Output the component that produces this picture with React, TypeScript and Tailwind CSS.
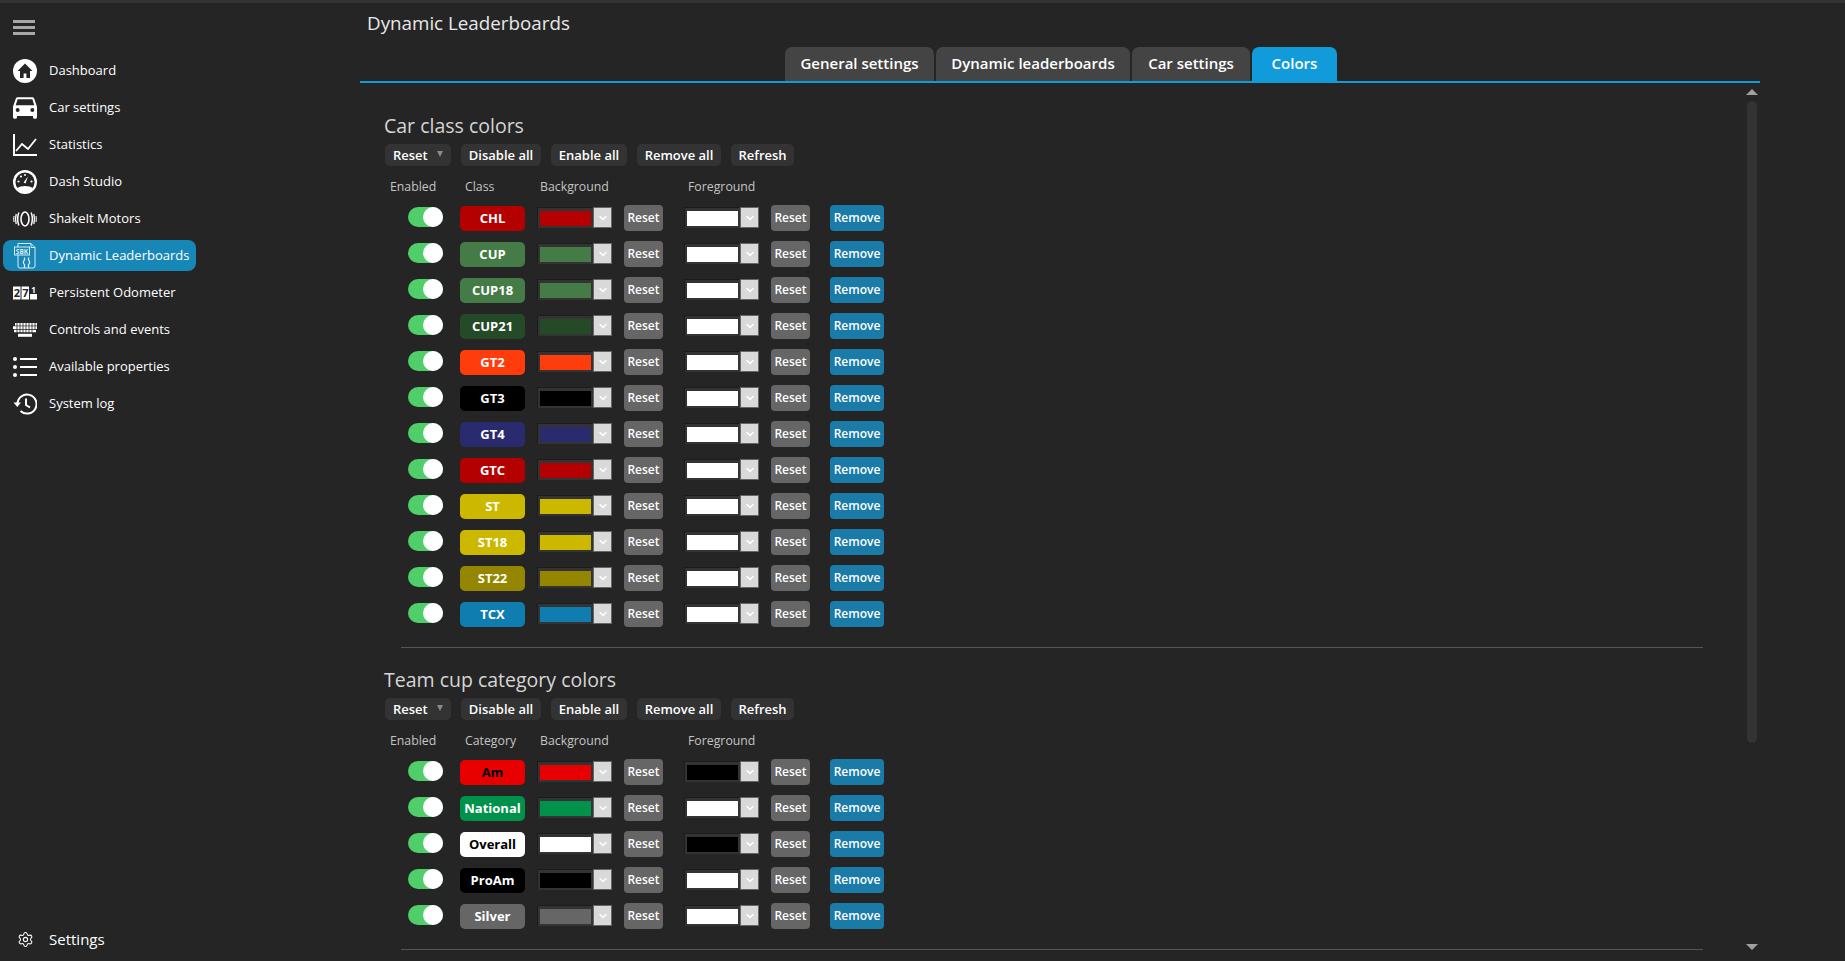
import React from 'react';
import { ChevronDown, Settings } from 'lucide-react';

const HomeIcon = () => (
  <svg viewBox="0 0 24 24" className="w-6 h-6">
    <circle cx="12" cy="12" r="12" fill="#fff" />
    <path d="M12 4.5 4.5 12H7v7h3.6v-4.6h2.8V19H17v-7h2.5z" fill="#252525" />
  </svg>
);

const CarIcon = () => (
  <svg viewBox="3 5 18 16" className="w-6 h-[22px]">
    <path
      fill="#fff"
      d="M5,11L6.5,6.5H17.5L19,11M17.5,16A1.5,1.5 0 0,1 16,14.5A1.5,1.5 0 0,1 17.5,13A1.5,1.5 0 0,1 19,14.5A1.5,1.5 0 0,1 17.5,16M6.5,16A1.5,1.5 0 0,1 5,14.5A1.5,1.5 0 0,1 6.5,13A1.5,1.5 0 0,1 8,14.5A1.5,1.5 0 0,1 6.5,16M18.92,6C18.72,5.42 18.16,5 17.5,5H6.5C5.84,5 5.28,5.42 5.08,6L3,12V20A1,1 0 0,0 4,21H5A1,1 0 0,0 6,20V19H18V20A1,1 0 0,0 19,21H20A1,1 0 0,0 21,20V12L18.92,6Z"
    />
  </svg>
);

const ChartIcon = () => (
  <svg viewBox="0 0 24 24" className="w-6 h-6" fill="none" stroke="#fff">
    <path d="M1 1v21h23" strokeWidth="2" />
    <path d="M3 18l6-7 6 5 8-10" strokeWidth="1.8" />
  </svg>
);

const GaugeIcon = () => (
  <svg viewBox="0 0 24 24" className="w-6 h-6">
    <circle cx="12" cy="12" r="10.8" fill="none" stroke="#fff" strokeWidth="2.4" />
    <path d="M4 18.500a11 11 0 0 0 16 0c-2-1.800-4.800-2.500-8-2.500s-6 .7-8 2.500z" fill="#fff" />
    <path d="M10.500 12.500 15 6.500l-2.500 7z" fill="#fff" />
    <circle cx="5.500" cy="11.500" r="1.100" fill="#fff" />
    <circle cx="18.500" cy="11.500" r="1.100" fill="#fff" />
    <circle cx="8" cy="6.500" r="1.100" fill="#fff" />
    <circle cx="12" cy="5" r="1" fill="#fff" />
  </svg>
);

const ShakeIcon = () => (
  <svg viewBox="0 0 24 16" className="w-6 h-4" fill="none" stroke="#fff">
    <ellipse cx="12" cy="8" rx="4" ry="7" strokeWidth="1.600" />
    <path d="M5.800 1.500c-1.400 4-1.400 9 0 13M18.200 1.500c1.400 4 1.400 9 0 13" strokeWidth="1.500" />
    <path d="M3.200 3c-.9 3.300-.9 6.700 0 10M20.800 3c.9 3.300.9 6.700 0 10" strokeWidth="1.300" />
    <path d="M1 5c-.4 2-.4 4 0 6M23 5c.4 2 .4 4 0 6" strokeWidth="1" />
  </svg>
);

const LeaderboardIcon = () => (
  <svg viewBox="0 0 22 26" className="w-[22px] h-[26px]" fill="none" stroke="#d7ecf5" strokeWidth="1">
    <path d="M4 4V.5h13l4 4V23a2 2 0 0 1-2 2H6a2 2 0 0 1-2-2V12" />
    <path d="M17 .5v4h4" />
    <rect x="0.500" y="4" width="15" height="8" fill="#1787b8" />
    <text x="8" y="10.500" textAnchor="middle" fontSize="6.500" fontWeight="700" fill="#d7ecf5" stroke="none">SBK</text>
    <path d="M10.500 14.500v2.500a2.800 2.800 0 0 0 0 4.500V25M14.500 14.500v2.500a2.800 2.800 0 0 1 0 4.500V25" strokeWidth="1.300" />
  </svg>
);

const OdometerIcon = () => (
  <svg viewBox="0 0 24 14" className="w-6 h-[14px]">
    <rect x="0" y="0.500" width="7.500" height="13" fill="#fff" />
    <rect x="8.500" y="0.500" width="7.500" height="13" fill="#fff" />
    <rect x="17" y="8" width="7" height="5.500" fill="#fff" />
    <text x="3.800" y="11" textAnchor="middle" fontSize="11" fontWeight="700" fill="#252525">2</text>
    <text x="12.300" y="11" textAnchor="middle" fontSize="11" fontWeight="700" fill="#252525">7</text>
    <text x="20.500" y="7" textAnchor="middle" fontSize="8" fontWeight="700" fill="#fff">1</text>
  </svg>
);

const KeyboardIcon = () => (
  <svg viewBox="0 0 24 14" className="w-6 h-[14px]" fill="#fff">
    <path d="M2 0h22v2.600H2z" />
    <path d="M0 3.300h24v2.700H0zM1 6.700h22v2.600H1z" />
    <path d="M5 10.800h14v3H5z" />
    <path d="M4 0v10M7 0v10M10 0v10M13 0v10M16 0v10M19 0v10M22 0v7" stroke="#252525" strokeWidth=".8" />
  </svg>
);

const ListIcon = () => (
  <svg viewBox="0 0 24 20" className="w-6 h-5" fill="#fff">
    <circle cx="2" cy="2" r="2" />
    <circle cx="2" cy="10" r="2" />
    <circle cx="2" cy="18" r="2" />
    <path d="M7 1h17v2H7zM7 9h17v2H7zM7 17h17v2H7z" />
  </svg>
);

const HistoryIcon = () => (
  <svg viewBox="0 0 24 24" className="w-6 h-6" fill="none" stroke="#fff" strokeWidth="2">
    <path d="M4.500 12a9.500 9.500 0 1 1 3 7" />
    <path d="M0.500 10.500h7.500L4.300 15z" fill="#fff" stroke="none" />
    <path d="M13 6.500V13l4 2.500" />
  </svg>
);

const navItems = [
  { name: 'Dashboard', icon: <HomeIcon /> },
  { name: 'Car settings', icon: <CarIcon /> },
  { name: 'Statistics', icon: <ChartIcon /> },
  { name: 'Dash Studio', icon: <GaugeIcon /> },
  { name: 'ShakeIt Motors', icon: <ShakeIcon /> },
  { name: 'Dynamic Leaderboards', icon: <LeaderboardIcon />, active: true },
  { name: 'Persistent Odometer', icon: <OdometerIcon /> },
  { name: 'Controls and events', icon: <KeyboardIcon /> },
  { name: 'Available properties', icon: <ListIcon /> },
  { name: 'System log', icon: <HistoryIcon /> },
];

const tabs = [
  { name: 'General settings', width: 'w-[149px]' },
  { name: 'Dynamic leaderboards', width: 'w-[194px]' },
  { name: 'Car settings', width: 'w-[118px]' },
  { name: 'Colors', width: 'w-[85px]', active: true },
];

const WHITE = 'bg-white';
const BLACK = 'bg-black';

const classRows = [
  { label: 'CHL', bg: 'bg-[#b40000]', fg: WHITE },
  { label: 'CUP', bg: 'bg-[#457b46]', fg: WHITE },
  { label: 'CUP18', bg: 'bg-[#457b46]', fg: WHITE },
  { label: 'CUP21', bg: 'bg-[#254a27]', fg: WHITE },
  { label: 'GT2', bg: 'bg-[#ff3c0c]', fg: WHITE },
  { label: 'GT3', bg: 'bg-black', fg: WHITE },
  { label: 'GT4', bg: 'bg-[#2a2a6e]', fg: WHITE },
  { label: 'GTC', bg: 'bg-[#b40000]', fg: WHITE },
  { label: 'ST', bg: 'bg-[#cdb800]', fg: WHITE },
  { label: 'ST18', bg: 'bg-[#cdb800]', fg: WHITE },
  { label: 'ST22', bg: 'bg-[#948600]', fg: WHITE },
  { label: 'TCX', bg: 'bg-[#0f7db0]', fg: WHITE },
];

const categoryRows = [
  { label: 'Am', bg: 'bg-[#e80000]', fg: BLACK, text: 'text-black' },
  { label: 'National', bg: 'bg-[#00914a]', fg: WHITE },
  { label: 'Overall', bg: 'bg-white', fg: BLACK, text: 'text-black' },
  { label: 'ProAm', bg: 'bg-black', fg: WHITE },
  { label: 'Silver', bg: 'bg-[#666666]', fg: WHITE },
];

type Row = { label: string; bg: string; fg: string; text?: string };

function ColorPicker({ color }: { color: string }) {
  return (
    <div className="flex w-[75px] h-[21px] mb-px">
      <div className="w-14 h-full bg-[#333333] border-t border-l border-[#1c1c1c] pt-[3px] px-[2px]">
        <div className={`w-full h-[15px] ${color}`} />
      </div>
      <div className="w-[19px] h-full bg-[#d9d9d9] border border-[#666666] flex items-center justify-center">
        <ChevronDown size={12} strokeWidth={3} className="text-white" />
      </div>
    </div>
  );
}

function SmallButton({ children, className }: { children: React.ReactNode; className: string }) {
  return (
    <button className={`h-[26px] rounded-[4px] text-white text-[12px] font-semibold flex items-center justify-center ${className}`}>
      {children}
    </button>
  );
}

function ColorRow({ row }: { row: Row }) {
  return (
    <div className="flex items-center h-9">
      <div className="ml-6 mb-[2px] w-[35px] h-5 rounded-full bg-[#4fce6a] flex justify-end">
        <div className="w-5 h-5 rounded-full bg-white" />
      </div>
      <div className={`ml-[17px] w-[65px] h-[25px] pt-px rounded-[5px] flex items-center justify-center text-[13px] font-bold ${row.bg} ${row.text ?? 'text-white'}`}>
        {row.label}
      </div>
      <div className="ml-3">
        <ColorPicker color={row.bg} />
      </div>
      <SmallButton className="ml-3 w-[39px] bg-[#666666]">Reset</SmallButton>
      <div className="ml-[21px]">
        <ColorPicker color={row.fg} />
      </div>
      <SmallButton className="ml-3 w-[39px] bg-[#666666]">Reset</SmallButton>
      <SmallButton className="ml-5 w-[54px] bg-[#1a7aa8]">Remove</SmallButton>
    </div>
  );
}

function ColorSection({ title, column, rows }: { title: string; column: string; rows: Row[] }) {
  const toolButton = 'h-[22px] pt-[2px] rounded-[5px] bg-[#333333] text-white text-[13px] font-semibold flex items-center';
  return (
    <section>
      <h2 className="h-7 leading-7 text-[19.500px] text-[#d5d5d5]">{title}</h2>
      <div className="flex mt-1 ml-px">
        <button className={`${toolButton} w-[66px] pl-2 justify-between pr-2`}>
          Reset
          <span className="w-0 h-0 -mt-1 border-x-[3px] border-x-transparent border-t-[6px] border-t-[#8a8a8a]" />
        </button>
        <button className={`${toolButton} w-20 ml-[10px] justify-center`}>Disable all</button>
        <button className={`${toolButton} w-[76px] ml-[10px] justify-center`}>Enable all</button>
        <button className={`${toolButton} w-[84px] ml-[10px] justify-center`}>Remove all</button>
        <button className={`${toolButton} w-[63px] ml-[10px] justify-center`}>Refresh</button>
      </div>
      <div className="flex h-5 mt-[10px] mb-1 pt-[2px] items-center text-[12.300px] text-[#c4c4c4]">
        <span className="ml-[6px] w-[75px]">Enabled</span>
        <span className="w-[75px]">{column}</span>
        <span className="w-[148px]">Background</span>
        <span>Foreground</span>
      </div>
      {rows.map((row) => (
        <ColorRow key={row.label} row={row} />
      ))}
      <div className="ml-[17px] mr-[13px] mt-[15px] h-px bg-[#555555]" />
    </section>
  );
}

export default function App() {
  return (
    <div className="h-[961px] overflow-hidden flex flex-col bg-[#252525] text-white font-['Open_Sans','Noto_Sans',sans-serif]">
      <div className="h-[3px] bg-[#333333]" />
      <div className="flex flex-1 min-h-0">
        {/* Sidebar */}
        <aside className="w-[360px] shrink-0 flex flex-col pb-[3px]">
          <div className="ml-[13px] mt-[17px] w-[22px] h-[15px] flex flex-col justify-between">
            <span className="h-[3px] bg-[#a8a8a8]" />
            <span className="h-[3px] bg-[#a8a8a8]" />
            <span className="h-[3px] bg-[#a8a8a8]" />
          </div>
          <nav className="mt-[20px] flex flex-col gap-[6px] items-start">
            {navItems.map((item) => (
              <a
                key={item.name}
                className={`ml-[3px] h-[31px] flex items-center pl-[10px] pr-[7px] rounded-lg text-[13px] ${item.active ? 'bg-[#1787b8]' : ''}`}
              >
                <span className="w-6 flex items-center justify-center shrink-0">{item.icon}</span>
                <span className="ml-3">{item.name}</span>
              </a>
            ))}
          </nav>
          <a className="mt-auto ml-[13px] h-[31px] mb-[3px] flex items-center text-[15px]">
            <span className="w-6 flex items-center justify-center shrink-0">
              <Settings size={17} strokeWidth={1.500} />
            </span>
            <span className="ml-3">Settings</span>
          </a>
        </aside>

        {/* Main */}
        <main className="w-[1400px] flex flex-col min-h-0">
          <h1 className="h-[44px] pl-[7px] pt-[3px] text-[18.800px] leading-[34px] text-[#e8e8e8]">Dynamic Leaderboards</h1>
          <div className="flex justify-center gap-[2px] pl-[2px] border-b-2 border-[#129bdb] h-[36px]">
            {tabs.map((tab) => (
              <div
                key={tab.name}
                className={`${tab.width} h-[34px] pb-[2px] rounded-t-[7px] flex items-center justify-center text-[15px] font-semibold ${tab.active ? 'bg-[#129bdb]' : 'bg-[#444444]'}`}
              >
                {tab.name}
              </div>
            ))}
          </div>
          <div className="flex flex-1 min-h-0">
            <div className="flex-1 min-w-0 overflow-hidden pl-6 pr-[30px] pt-[29px] flex flex-col gap-[18px]">
              <ColorSection title="Car class colors" column="Class" rows={classRows} />
              <ColorSection title="Team cup category colors" column="Category" rows={categoryRows} />
            </div>
            <div className="w-3 mr-[2px] flex flex-col items-center pt-[6px]">
              <div className="w-0 h-0 border-x-[6px] border-x-transparent border-b-[6px] border-b-[#a0a0a0]" />
              <div className="w-[10px] h-[642px] mt-[6px] rounded-full bg-[#333333]" />
              <div className="w-0 h-0 mt-auto mb-[11px] border-x-[6px] border-x-transparent border-t-[6px] border-t-[#a0a0a0]" />
            </div>
          </div>
        </main>
      </div>
    </div>
  );
}
